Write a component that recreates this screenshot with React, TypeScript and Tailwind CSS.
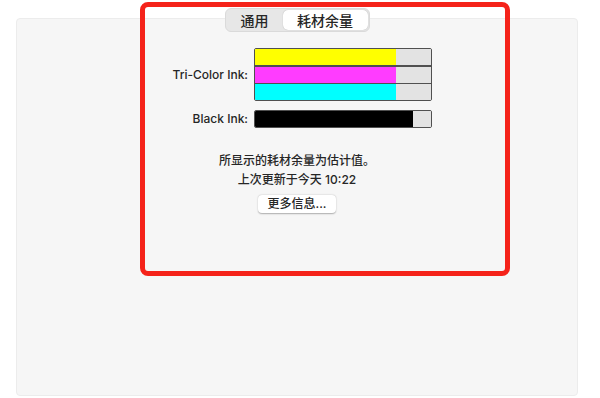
import React from 'react';

const font = { fontFamily: '"Inter", "Noto Sans CJK SC", sans-serif' };

function InkBar({ level, color }: { level: number; color: string }) {
  return (
    <div className="flex h-[16px] w-full">
      <div className={`h-full ${color}`} style={{ width: `${level}%` }} />
      <div className="h-full flex-1 bg-[#e3e3e3]" />
    </div>
  );
}

export default function App() {
  return (
    <div className="relative h-[398px] w-[600px] overflow-hidden bg-white font-medium text-[#262626]" style={font}>
      <div className="ml-[16px] mt-[18px] flex h-[378px] w-[562px] flex-col rounded-[4px] border border-[#ececec] bg-[#f6f6f6]">
        {/* tabs */}
        <div className="-mt-[11px] flex justify-center">
          <div className="flex h-[24px] items-stretch rounded-[6px] border border-[#dadada] bg-[#e7e7e7] p-[1px]">
            <div className="flex w-[56px] items-center justify-center text-[14px] text-[#262626]">通用</div>
            <div className="flex w-[85px] items-center justify-center rounded-[5px] bg-white text-[14px] text-[#262626] shadow-[0_0_1px_rgba(0,0,0,0.3)]">
              耗材余量
            </div>
          </div>
        </div>

        {/* levels */}
        <div className="mt-[16px] flex items-center">
          <div className="ml-[131px] w-[100px] text-right text-[12px] leading-none">Tri-Color Ink:</div>
          <div className="ml-[6px] flex w-[178px] flex-col overflow-hidden rounded-[2px] border-[1.5px] border-[#505050]">
            <InkBar level={80} color="bg-[#ffff00]" />
            <div className="h-[1.5px] bg-[#505050]" />
            <InkBar level={80} color="bg-[#ff3cff]" />
            <div className="h-[1.5px] bg-[#505050]" />
            <InkBar level={80} color="bg-[#00ffff]" />
          </div>
        </div>
        <div className="mt-[9px] flex items-center">
          <div className="ml-[131px] w-[100px] text-right text-[12px] leading-none">Black Ink:</div>
          <div className="ml-[6px] flex w-[178px] overflow-hidden rounded-[2px] border-[1.5px] border-[#505050]">
            <InkBar level={90} color="bg-black" />
          </div>
        </div>

        {/* note */}
        <div className="mt-[23px] flex flex-col items-center text-[12px] leading-[19px]">
          <div>所显示的耗材余量为估计值。</div>
          <div>上次更新于今天 10:22</div>
          <button className="mt-[6px] flex h-[18px] w-[78px] items-center justify-center rounded-[4px] bg-white text-[12px] leading-none shadow-[0_0.5px_1.5px_rgba(0,0,0,0.3)]">
            更多信息...
          </button>
        </div>
      </div>

      {/* annotation box */}
      <div className="absolute left-[140px] top-[2px] h-[274px] w-[370px] rounded-[8px] border-[5px] border-[#f5231a]" />
    </div>
  );
}
